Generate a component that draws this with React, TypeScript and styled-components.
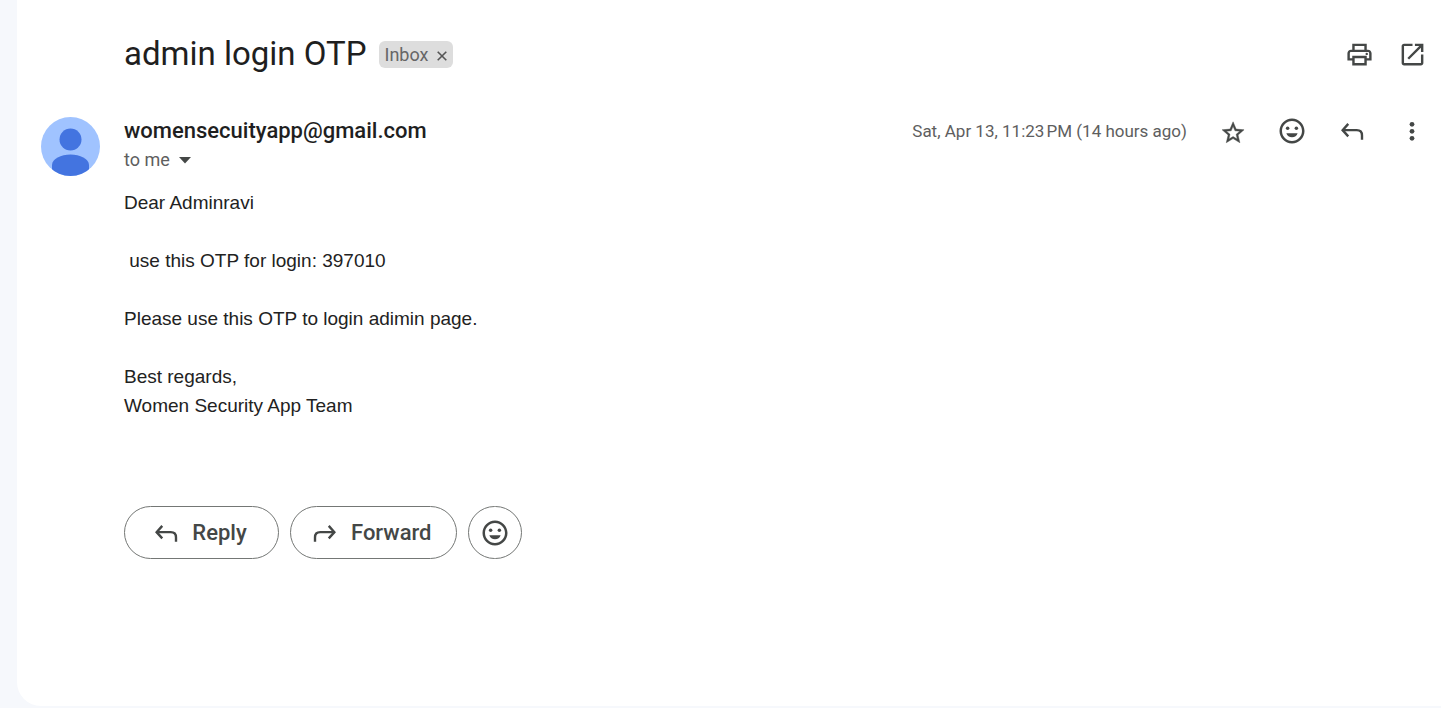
import React from "react";
import styled, { createGlobalStyle } from "styled-components";

const GlobalStyle = createGlobalStyle`
  * { box-sizing: border-box; }
  body { margin: 0; background: #f6f8fc; }
`;

const uiFont = `Roboto, "Liberation Sans", sans-serif`;

const Page = styled.div`
  display: flex;
  min-height: 100vh;
  padding: 0 0 2px 17px;
  background: #f6f8fc;
  font-family: ${uiFont};
`;

const Card = styled.main`
  flex: 1;
  min-width: 0;
  padding: 27px 14px 48px 24px;
  background: #fff;
  border-bottom-left-radius: 24px;
`;

const SubjectBar = styled.header`
  display: flex;
  align-items: center;
  justify-content: space-between;
  min-height: 54px;
  padding-left: 83px;
`;

const SubjectGroup = styled.div`
  display: flex;
  align-items: center;
  gap: 12px;
`;

const Subject = styled.h1`
  margin: 0;
  font-size: 33px;
  line-height: 40px;
  font-weight: 400;
  color: #1f1f1f;
`;

const Label = styled.span`
  display: flex;
  align-items: center;
  gap: 8px;
  height: 27px;
  padding: 0 6px;
  border-radius: 6px;
  background: #ddd;
  color: #666;
  font-size: 18px;
  line-height: 27px;
`;

const PlainButton = styled.button`
  display: flex;
  align-items: center;
  justify-content: center;
  padding: 0;
  border: 0;
  background: none;
  color: #444746;
  cursor: pointer;
`;

const LabelRemove = styled(PlainButton)`
  padding-top: 3px;
  color: #555;
`;

const Actions = styled.div<{ $gap: number }>`
  display: flex;
  align-items: center;
  gap: ${(p) => p.$gap}px;
`;

const HeadActions = styled(Actions)`
  height: 28px;
`;

const Message = styled.article`
  display: flex;
  gap: 24px;
  margin-top: 36px;
`;

const Avatar = styled.svg`
  flex: none;
  width: 59px;
  height: 59px;
`;

const MessageMain = styled.div`
  flex: 1;
  min-width: 0;
`;

const MessageHead = styled.div`
  display: flex;
  justify-content: space-between;
  align-items: flex-start;
`;

const Sender = styled.div`
  font-size: 22px;
  line-height: 28px;
  font-weight: 500;
  color: #1f1f1f;
`;

const Recipient = styled(PlainButton)`
  gap: 8px;
  font-family: ${uiFont};
  font-size: 18px;
  line-height: 30px;
  color: #5e5e5e;
`;

const DateText = styled.time`
  font-size: 17px;
  line-height: 28px;
  color: #5e5e5e;
`;

const Body = styled.div`
  padding-top: 13px;
  font-family: "Liberation Sans", Arial, sans-serif;
  font-size: 19px;
  line-height: 29px;
  color: #222;
`;

const Paragraph = styled.p`
  margin: 0 0 29px;
  white-space: pre-wrap;
`;

const ReplyBar = styled.div`
  display: flex;
  gap: 11px;
  padding-top: 57px;
`;

const PillButton = styled.button`
  display: flex;
  align-items: center;
  justify-content: center;
  gap: 14px;
  min-width: 155px;
  height: 53px;
  padding: 0 24px 0 22px;
  border: 1px solid #747775;
  border-radius: 27px;
  background: #fff;
  color: #444746;
  font-family: ${uiFont};
  font-size: 22px;
  font-weight: 500;
  line-height: 30px;
  cursor: pointer;
`;

const RoundButton = styled(PillButton)`
  min-width: 54px;
  padding: 0 11px;
`;

type GlyphProps = { children: React.ReactNode; size?: number; viewBox?: string };

const Glyph = ({ children, size = 30, viewBox = "0 0 24 24" }: GlyphProps) => (
  <svg width={size} height={size} viewBox={viewBox} fill="currentColor" aria-hidden="true">
    {children}
  </svg>
);

const SmileIcon = () => (
  <Glyph>
    <path d="M12 2C6.500 2 2 6.500 2 12s4.500 10 10 10 10-4.500 10-10S17.500 2 12 2zm0 18c-4.420 0-8-3.580-8-8s3.580-8 8-8 8 3.580 8 8-3.580 8-8 8z" />
    <circle cx="8.500" cy="9.700" r="1.400" />
    <circle cx="15.500" cy="9.700" r="1.400" />
    <path d="M7.500 13.700h9c-.600 2.200-2.300 3.300-4.500 3.300s-3.900-1.100-4.500-3.300z" />
  </Glyph>
);

type ArrowProps = { forward?: boolean; trimmed?: boolean };

const ArrowIcon = ({ forward = false, trimmed = false }: ArrowProps) => (
  <Glyph size={trimmed ? 24 : 30} viewBox={trimmed ? "2.4 2.4 19.2 19.2" : undefined}>
    <g
      transform={forward ? "translate(24 0) scale(-1 1)" : undefined}
      fill="none"
      stroke="currentColor"
      strokeWidth="1.900"
    >
      <path d="M9 6.300 4.500 11.300l4.500 5" />
      <path d="M4.500 11.300h11.300c2.800 0 4.200 1.500 4.200 4.200v3.500" />
    </g>
  </Glyph>
);

export default function App() {
  return (
    <Page>
      <GlobalStyle />
      <Card>
        <SubjectBar>
          <SubjectGroup>
            <Subject>admin login OTP</Subject>
            <Label>
              Inbox
              <LabelRemove aria-label="Remove label Inbox">
                <svg width="10" height="10" viewBox="0 0 10 10" stroke="currentColor" strokeWidth="1.600">
                  <path d="M.700.700l8.600 8.600M9.300.700.700 9.300" />
                </svg>
              </LabelRemove>
            </Label>
          </SubjectGroup>
          <Actions $gap={24}>
            <PlainButton aria-label="Print all">
              <Glyph size={29}>
                <path d="M19 8h-1V3H6v5H5c-1.660 0-3 1.340-3 3v6h4v4h12v-4h4v-6c0-1.660-1.340-3-3-3zM8 5h8v3H8V5zm8 14H8v-4h8v4zm2-4v-2H6v2H4v-4c0-.550.450-1 1-1h14c.550 0 1 .450 1 1v4h-2z" />
                <circle cx="18" cy="11.500" r="1" />
              </Glyph>
            </PlainButton>
            <PlainButton aria-label="Open in new window">
              <Glyph size={29}>
                <path d="M19 19H5V5h7V3H5c-1.110 0-2 .900-2 2v14c0 1.100.890 2 2 2h14c1.100 0 2-.900 2-2v-7h-2v7zM14 3v2h3.590l-9.830 9.830 1.410 1.410L19 6.410V10h2V3h-7z" />
              </Glyph>
            </PlainButton>
          </Actions>
        </SubjectBar>

        <Message>
          <Avatar viewBox="0 0 59 59" aria-hidden="true">
            <clipPath id="avatar-disc">
              <circle cx="29.500" cy="29.500" r="29.500" />
            </clipPath>
            <g clipPath="url(#avatar-disc)">
              <path fill="#a0c3ff" d="M0 0h59v59H0z" />
              <circle cx="29.500" cy="22.500" r="11" fill="#4374e0" />
              <path fill="#4374e0" d="M11 59V48c0-6 9-10.500 18.500-10.500S48 42 48 48v11z" />
            </g>
          </Avatar>
          <MessageMain>
            <MessageHead>
              <div>
                <Sender>womensecuityapp@gmail.com</Sender>
                <Recipient aria-label="Show details">
                  to me
                  <svg width="14" height="8" viewBox="0 0 14 8" fill="#444746" aria-hidden="true">
                    <path d="M1 1h12L7 7.500z" />
                  </svg>
                </Recipient>
              </div>
              <HeadActions $gap={30}>
                <DateText>Sat, Apr 13, 11:23&#8239;PM (14 hours ago)</DateText>
                <PlainButton aria-label="Star">
                  <Glyph>
                    <path
                      transform="translate(2.300 2.900) scale(.88)"
                      d="M22 9.240l-7.190-.620L12 2 9.190 8.630 2 9.240l5.460 4.730L5.820 21 12 17.270 18.180 21l-1.630-7.030L22 9.240zM12 15.400l-3.760 2.270 1-4.280-3.320-2.880 4.380-.380L12 6.100l1.710 4.040 4.380.380-3.320 2.880 1 4.280L12 15.400z"
                      stroke="currentColor"
                      strokeWidth=".4"
                    />
                  </Glyph>
                </PlainButton>
                <PlainButton aria-label="Add reaction">
                  <SmileIcon />
                </PlainButton>
                <PlainButton aria-label="Reply">
                  <ArrowIcon />
                </PlainButton>
                <PlainButton aria-label="More">
                  <Glyph>
                    <circle cx="12" cy="6.600" r="1.900" />
                    <circle cx="12" cy="12.200" r="1.900" />
                    <circle cx="12" cy="17.800" r="1.900" />
                  </Glyph>
                </PlainButton>
              </HeadActions>
            </MessageHead>

            <Body>
              <Paragraph>Dear Adminravi</Paragraph>
              <Paragraph> use this OTP for login: 397010</Paragraph>
              <Paragraph>Please use this OTP to login adimin page.</Paragraph>
              <Paragraph>
                Best regards,
                <br />
                Women Security App Team
              </Paragraph>
            </Body>

            <ReplyBar>
              <PillButton>
                <ArrowIcon trimmed />
                Reply
              </PillButton>
              <PillButton>
                <ArrowIcon forward trimmed />
                Forward
              </PillButton>
              <RoundButton aria-label="Add reaction">
                <SmileIcon />
              </RoundButton>
            </ReplyBar>
          </MessageMain>
        </Message>
      </Card>
    </Page>
  );
}
